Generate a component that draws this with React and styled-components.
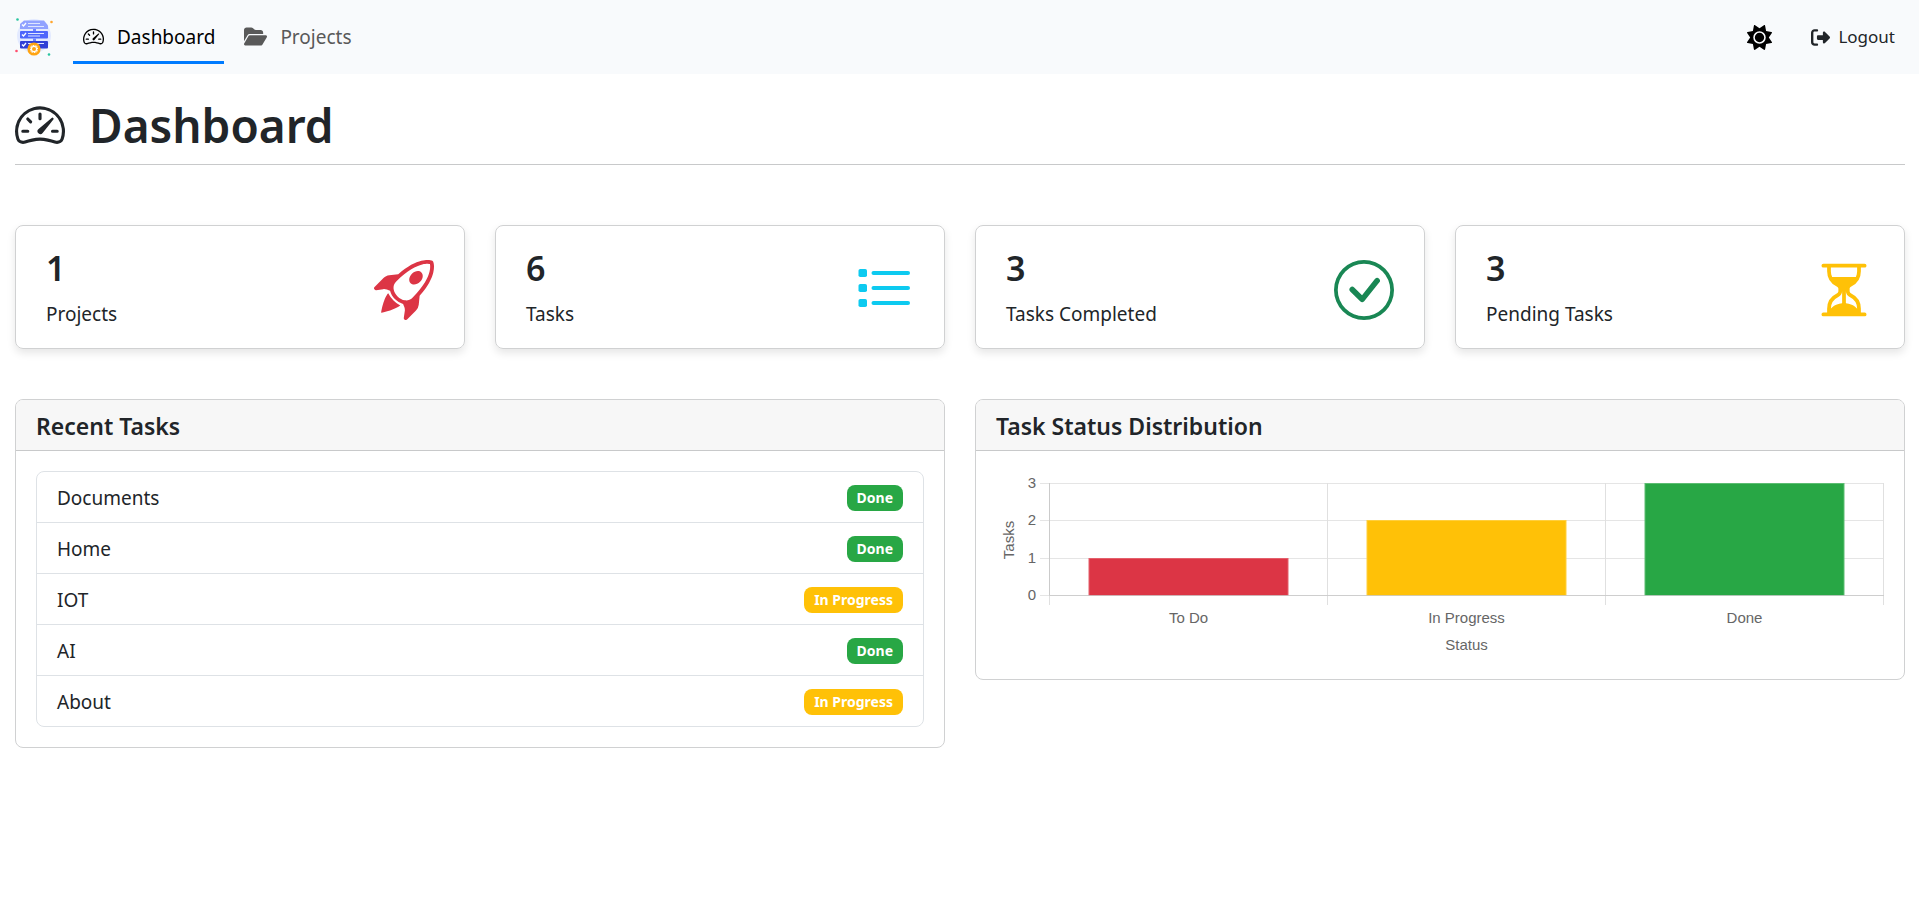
import React from "react";
import styled, { createGlobalStyle } from "styled-components";
import {
  BsSpeedometer2,
  BsRocketTakeoff,
  BsCheckCircle,
  BsHourglassSplit,
} from "react-icons/bs";
import { FaFolderOpen, FaRightFromBracket, FaSun } from "react-icons/fa6";

const GlobalStyle = createGlobalStyle`
  *, *::before, *::after { box-sizing: border-box; }
  body {
    margin: 0;
    background: #fff;
    color: #212529;
    font-family: "Noto Sans", "Open Sans", sans-serif;
    font-size: 19px;
    line-height: 30px;
  }
`;

const Navbar = styled.nav`
  display: flex;
  align-items: center;
  height: 74px;
  padding: 0 15px;
  background: #f8fafc;
`;

const Brand = styled.a`
  display: flex;
  margin-right: 20px;
`;

const NavLinks = styled.div`
  display: flex;
  flex: 1;
  gap: 10px;
`;

const NavLink = styled.a`
  display: flex;
  align-items: center;
  gap: 13px;
  height: 53px;
  padding: 2px 9px 0 10px;
  border-bottom: 3px solid ${(p) => (p.$active ? "#007bff" : "transparent")};
  color: ${(p) => (p.$active ? "#000" : "#595959")};
  text-decoration: none;
`;

const NavActions = styled.div`
  display: flex;
  align-items: center;
  gap: 20px;
`;

const PlainButton = styled.button`
  display: flex;
  align-items: center;
  gap: 8px;
  padding: 0 9px 0 10px;
  border: 0;
  background: none;
  color: ${(p) => (p.$dark ? "#000" : "#212529")};
  font: inherit;
  font-size: 17px;
  cursor: pointer;
`;

const Main = styled.main`
  padding: 20px 14px 20px 15px;
`;

const PageTitle = styled.h1`
  display: flex;
  align-items: center;
  gap: 24px;
  margin: 0 0 60px;
  padding: 1px 0 9px;
  border-bottom: 1px solid #c8c9ca;
  font-size: 46px;
  font-weight: 600;
  line-height: 60px;
`;

const StatGrid = styled.section`
  display: grid;
  grid-template-columns: repeat(4, 1fr);
  gap: 30px;
  margin-bottom: 50px;
`;

const StatCard = styled.article`
  display: flex;
  align-items: center;
  justify-content: space-between;
  height: 124px;
  padding: 6px 30px 0;
  border: 1px solid #d0d1d2;
  border-radius: 8px;
  box-shadow: 0 4px 8px rgba(0, 0, 0, 0.1);
  color: ${(p) => p.$color};
`;

const StatText = styled.div`
  display: flex;
  flex-direction: column;
  gap: 10px;
  padding-bottom: 4px;
  color: #212529;
`;

const StatValue = styled.strong`
  font-size: 34px;
  font-weight: 600;
  line-height: 42px;
`;

const PanelGrid = styled.section`
  display: grid;
  grid-template-columns: repeat(2, 1fr);
  align-items: start;
  gap: 30px;
`;

const Panel = styled.article`
  border: 1px solid #d0d1d2;
  border-radius: 8px;
  overflow: hidden;
`;

const PanelTitle = styled.h2`
  margin: 0;
  padding: 11px 20px 9px;
  border-bottom: 1px solid #c8c9ca;
  background: #f7f7f7;
  font-size: 23px;
  font-weight: 600;
  line-height: 30px;
`;

const PanelBody = styled.div`
  padding: 20px;
`;

const TaskList = styled.ul`
  margin: 0;
  padding: 0;
  border: 1px solid #dee2e6;
  border-radius: 8px;
  list-style: none;
`;

const TaskRow = styled.li`
  display: flex;
  align-items: center;
  justify-content: space-between;
  padding: 11px 20px 9px;

  & + & {
    border-top: 1px solid #dee2e6;
  }
`;

const Badge = styled.span`
  padding: 0 10px;
  border-radius: 8px;
  background: ${(p) => (p.$status === "Done" ? "#28a745" : "#ffc107")};
  color: #fff;
  font-size: 14px;
  font-weight: 700;
  line-height: 26px;
`;

const Chart = styled.svg`
  display: block;
  width: 100%;
  height: auto;
  font-family: "Liberation Sans", Arial, sans-serif;
  font-size: 15px;
  fill: #666;
`;

const Logo = () => (
  <svg width="38" height="38" viewBox="0 0 38 38" role="img" aria-label="Task manager">
    <circle cx="19" cy="18" r="17" fill="#e3eaff" />
    <path d="M9 2.500h20l4 5v3.500h-28v-5z" fill="#91a2ff" />
    <rect x="5" y="13" width="28" height="7.500" rx="1" fill="#4e66fb" />
    <rect x="5" y="23" width="28" height="7.500" rx="1" fill="#3140d6" />
    <path d="M18 11h3v2h-3zM18 20.500h3v2.500h-3z" fill="#6f84ff" />
    <path
      d="M7 6.500l1.500 1.500 2.500-3M7 16.500l1.500 1.500 2.500-3M7 26.500l1.500 1.500 2.500-3"
      fill="none" stroke="#fff" strokeWidth="1.300"
    />
    <path d="M13 5.500h12M13 8.500h16M13 15.500h16M13 18h12M13 25.500h16" stroke="#dfe6ff" strokeWidth="1" />
    <circle cx="19" cy="31" r="5.300" fill="#fff" stroke="#ffa412" strokeWidth="2.600" />
    <circle cx="19" cy="31" r="3.600" fill="none" stroke="#ffa412" strokeWidth="1" strokeDasharray="1.300 1.500" />
    <circle cx="19" cy="31" r="2" fill="#ffa412" />
    <circle cx="2.500" cy="1.500" r="1.300" fill="#29c5a0" />
    <circle cx="36.500" cy="4" r="1.300" fill="#ffa62e" />
    <circle cx="1.500" cy="33" r="1.300" fill="#ff4f6e" />
    <circle cx="34" cy="36.500" r="1.300" fill="#29c5a0" />
  </svg>
);

const ListIcon = () => (
  <svg width="60" height="60" viewBox="0 0 60 60" fill="currentColor" aria-hidden="true">
    {[9, 24, 39].map((y) => (
      <g key={y}>
        <rect x="4.500" y={y} width="8.500" height="8" rx="1.800" />
        <rect x="17.500" y={y + 2} width="38.500" height="4" rx="2" />
      </g>
    ))}
  </svg>
);

const stats = [
  { value: 1, label: "Projects", color: "#dc3545", icon: <BsRocketTakeoff size={60} /> },
  { value: 6, label: "Tasks", color: "#0dcaf0", icon: <ListIcon /> },
  { value: 3, label: "Tasks Completed", color: "#198754", icon: <BsCheckCircle size={60} /> },
  { value: 3, label: "Pending Tasks", color: "#ffc107", icon: <BsHourglassSplit size={60} /> },
];

const tasks = [
  ["Documents", "Done"],
  ["Home", "Done"],
  ["IOT", "In Progress"],
  ["AI", "Done"],
  ["About", "In Progress"],
];

const bars = [
  { label: "To Do", value: 1, fill: "#dc3545", edge: "#e4606c" },
  { label: "In Progress", value: 2, fill: "#ffc107", edge: "#ffcf3e" },
  { label: "Done", value: 3, fill: "#28a745", edge: "#5cbd72" },
];

const axisX = 53.5;
const baseY = 124.5;
const columnWidth = 278;
const unit = 37.333;
const levelY = (n) => Math.round(baseY - n * unit - 0.5) + 0.5;

const StatusChart = () => (
  <Chart viewBox="0 0 888 188" role="img" aria-label="Number of tasks in each status">
    {[0, 1, 2, 3].map((n) => (
      <g key={n}>
        <path d={`M44 ${levelY(n)}H888`} stroke="#e5e5e5" />
        <text x="40" y={levelY(n) + 4.5} textAnchor="end">{n}</text>
      </g>
    ))}
    {[0, 1, 2, 3].map((n) => (
      <path key={n} d={`M${axisX + n * columnWidth} 12V134`} stroke="#e0e0e0" />
    ))}
    <path d={`M${axisX} 12V${baseY}`} stroke="#cbcbcb" />
    {bars.map((bar, i) => (
      <g key={bar.label}>
        <rect
          x={axisX + i * columnWidth + 39.5}
          y={levelY(bar.value)}
          width="199"
          height={baseY - levelY(bar.value)}
          fill={bar.fill}
          stroke={bar.edge}
        />
        <text x={axisX + (i + 0.5) * columnWidth} y="152" textAnchor="middle">{bar.label}</text>
      </g>
    ))}
    <path d={`M${axisX} ${baseY}H888`} stroke="#c8c8c8" strokeOpacity="0.8" />
    <text x={axisX + 1.5 * columnWidth} y="179" textAnchor="middle">Status</text>
    <text transform="translate(18 69) rotate(-90)" textAnchor="middle">Tasks</text>
  </Chart>
);

export default function App() {
  return (
    <>
      <GlobalStyle />
      <Navbar>
        <Brand href="#"><Logo /></Brand>
        <NavLinks>
          <NavLink href="#dashboard" $active><BsSpeedometer2 size={21} />Dashboard</NavLink>
          <NavLink href="#projects"><FaFolderOpen size={23} />Projects</NavLink>
        </NavLinks>
        <NavActions>
          <PlainButton type="button" aria-label="Toggle theme" $dark><FaSun size={25} /></PlainButton>
          <PlainButton type="button"><FaRightFromBracket size={19} />Logout</PlainButton>
        </NavActions>
      </Navbar>
      <Main>
        <PageTitle><BsSpeedometer2 size={50} />Dashboard</PageTitle>
        <StatGrid>
          {stats.map((s) => (
            <StatCard key={s.label} $color={s.color}>
              <StatText>
                <StatValue>{s.value}</StatValue>
                <span>{s.label}</span>
              </StatText>
              {s.icon}
            </StatCard>
          ))}
        </StatGrid>
        <PanelGrid>
          <Panel>
            <PanelTitle>Recent Tasks</PanelTitle>
            <PanelBody>
              <TaskList>
                {tasks.map(([name, status]) => (
                  <TaskRow key={name}>
                    {name}
                    <Badge $status={status}>{status}</Badge>
                  </TaskRow>
                ))}
              </TaskList>
            </PanelBody>
          </Panel>
          <Panel>
            <PanelTitle>Task Status Distribution</PanelTitle>
            <PanelBody><StatusChart /></PanelBody>
          </Panel>
        </PanelGrid>
      </Main>
    </>
  );
}
